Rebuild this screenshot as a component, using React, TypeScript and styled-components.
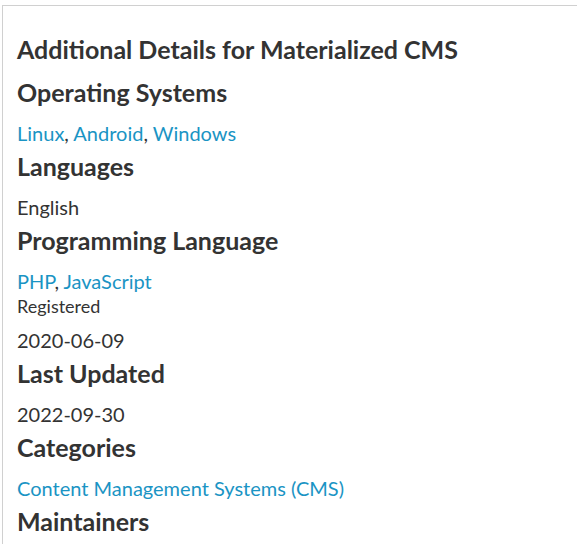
import React from "react";
import styled, { createGlobalStyle } from "styled-components";

const Global = createGlobalStyle`
  html, body { margin: 0; padding: 0; background: #fff; }
  body { font-family: Lato, "Open Sans", sans-serif; color: #333; }
`;

const Panel = styled.section`
  margin: 5px 0 0 2px;
  border-top: 1px solid #d0d0d0;
  border-left: 1px solid #d0d0d0;
  padding: 28px 14px 0 14px;
  min-height: 560px;
  box-sizing: border-box;
`;

const Title = styled.h2`
  font-size: 25px;
  font-weight: 700;
  line-height: 30px;
  margin: 0 0 13px;
  color: #333;
`;

const Heading = styled.h3`
  font-size: 25px;
  font-weight: 700;
  line-height: 30px;
  margin: 3px 0 11px;
  color: #333;
`;

const Value = styled.p`
  font-size: 20px;
  line-height: 30px;
  margin: 0;
  color: #333;
`;

const Label = styled.p`
  font-size: 18px;
  line-height: 20px;
  margin: 0 0 9px;
  color: #333;
`;

const Link = styled.a`
  color: #1a94c4;
  text-decoration: none;
`;

const list = (items: string[]) =>
  items.map((t, i) => (
    <React.Fragment key={t}>
      <Link href="#">{t}</Link>
      {i < items.length - 1 ? ", " : ""}
    </React.Fragment>
  ));

export default function App() {
  return (
    <>
      <Global />
      <Panel>
        <Title>Additional Details for Materialized CMS</Title>
        <Heading>Operating Systems</Heading>
        <Value>{list(["Linux", "Android", "Windows"])}</Value>
        <Heading>Languages</Heading>
        <Value>English</Value>
        <Heading>Programming Language</Heading>
        <Value>{list(["PHP", "JavaScript"])}</Value>
        <Label>Registered</Label>
        <Value>2020-06-09</Value>
        <Heading>Last Updated</Heading>
        <Value>2022-09-30</Value>
        <Heading>Categories</Heading>
        <Value>{list(["Content Management Systems (CMS)"])}</Value>
        <Heading>Maintainers</Heading>
      </Panel>
    </>
  );
}
